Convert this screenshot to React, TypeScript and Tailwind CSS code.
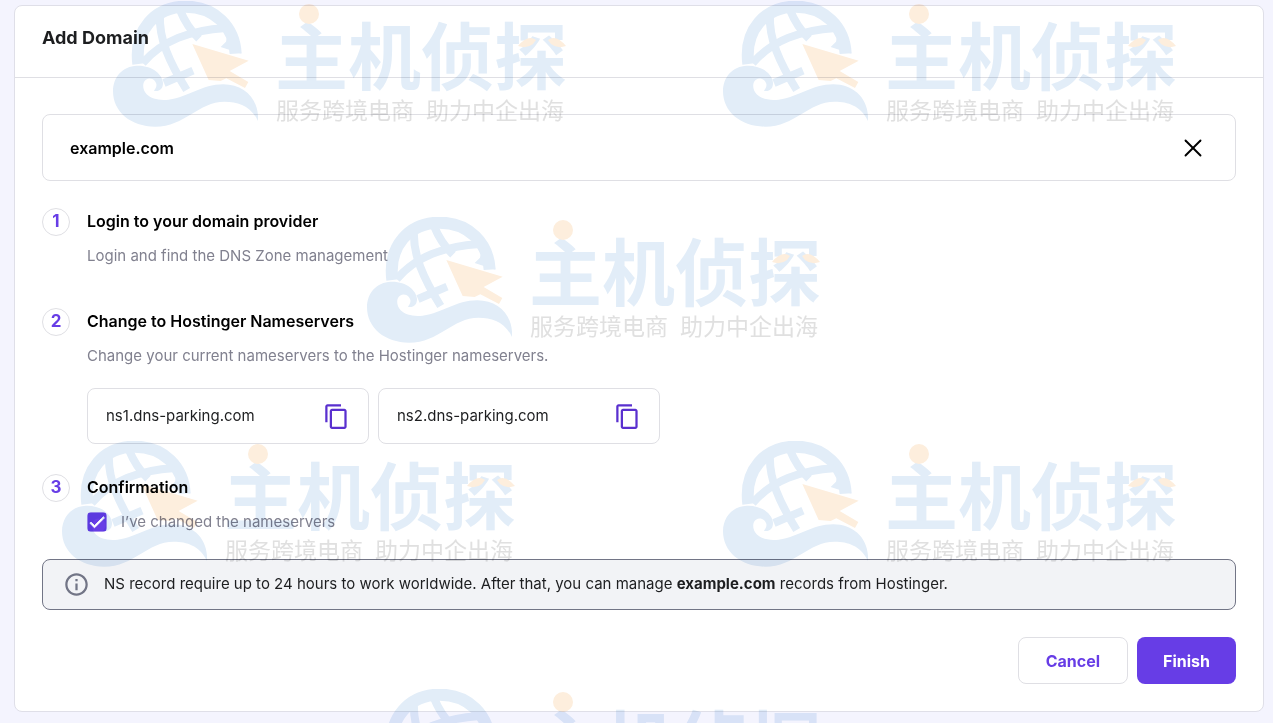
import { useState } from "react";
import type { ReactNode } from "react";
import { X } from "lucide-react";
import { MdCheck, MdContentCopy, MdOutlineInfo } from "react-icons/md";

const nameservers = ["ns1.dns-parking.com", "ns2.dns-parking.com"];

const watermarks = [
  "left-[113px] top-px",
  "left-[723px] top-px",
  "left-[367px] top-[217px]",
  "left-[62px] top-[441px]",
  "left-[723px] top-[441px]",
  "left-[367px] top-[689px]",
];

function Watermark({ position }: { position: string }) {
  return (
    <div className={`absolute flex gap-[17px] mix-blend-multiply ${position}`}>
      <svg width="145" height="127" viewBox="39 3 435 381" fill="none">
        {/* Globe */}
        <g stroke="#e2edf8">
          <path d="M115 192C102 90 165 20 257 20c88 0 146 62 150 141" strokeWidth="36" />
          <path d="M180 45c-4 70 28 142 80 225" strokeWidth="24" />
          <path d="M240 30c12 30 32 62 57 86" strokeWidth="24" />
          <path d="M128 189c60-68 140-98 250-105" strokeWidth="24" />
          <path d="M192 249l87-37" strokeWidth="24" />
        </g>
        <path d="M384 95l-6 30-16 16 62 20-8-46z" fill="#e2edf8" />
        {/* Wave */}
        <path
          d="M110 197c46-2 78 26 79 52 0 16-8 26-27 24 4-8 12-16 4-28-6-9-18-13-28-6-12 8-11 30 2 44 14 14 38 19 66 16 62-8 98-46 164-46 62 0 108 44 104 110-22-46-60-58-100-58-80 0-118 75-209 75-72 0-126-44-126-106 0-44 30-75 71-77z"
          fill="#e2edf8"
        />
        {/* Pointer */}
        <path
          d="M277 132l169 50-57 31 56 33-10 18-56-29-17 8-36-3z"
          fill="#fdeedd"
        />
      </svg>
      <div className="relative pt-[15px]">
        <p className="font-['Noto_Sans_CJK_SC',sans-serif] text-[73px] leading-[72px] font-bold whitespace-nowrap text-[#e2edf8]">
          主机侦探
        </p>
        <svg className="absolute top-0 left-0" width="292" height="90">
          <circle cx="34" cy="13" r="10" fill="#fdeedd" />
          <path d="M243 45q10-12 18-6l-3 4q-6 5-15 2z" fill="#fdeedd" />
          <path d="M291 45q-10-12-18-6l3 4q6 5 15 2z" fill="#fdeedd" />
        </svg>
        <p className="mt-[9px] flex gap-3 pl-px font-['Noto_Sans_CJK_SC',sans-serif] text-[23px] leading-6 whitespace-nowrap text-[#e0e0e0]">
          <span>服务跨境电商</span>
          <span>助力中企出海</span>
        </p>
      </div>
    </div>
  );
}

function Step({
  number,
  title,
  children,
}: {
  number: number;
  title: string;
  children: ReactNode;
}) {
  return (
    <li className="flex gap-[17px]">
      <span className="flex size-7 shrink-0 items-center justify-center rounded-full border border-[#dfdfe4] text-[17px] font-bold text-[#673de6]">
        {number}
      </span>
      <div className="min-w-0 flex-1">
        <h2 className="text-base leading-[26px] font-semibold text-black">
          {title}
        </h2>
        <div className="mt-[10px] leading-6 text-[#81818f]">{children}</div>
      </div>
    </li>
  );
}

export default function App() {
  const [changed, setChanged] = useState(true);

  return (
    <div className="relative min-h-screen overflow-hidden bg-[#f4f4fe] px-[9px] pt-[5px] pb-[10px] pl-[14px] font-['Inter',sans-serif] text-[15px] text-[#1d1e20]">
      <main className="rounded-lg border border-[#dfdfe8] bg-white">
        <header className="border-b border-[#dfdfe4] px-[27px] pt-[18px] pb-[25px]">
          <h1 className="text-lg leading-7 font-bold">Add Domain</h1>
        </header>

        <div className="px-[27px] pt-9 pb-[27px]">
          <div className="flex h-[67px] items-center justify-between rounded-lg border border-[#dfdfe4] px-[27px]">
            <span className="text-base font-semibold text-black">example.com</span>
            <button type="button" aria-label="Clear domain" className="text-black">
              <X size={30} strokeWidth={1.5} />
            </button>
          </div>

          <ol className="mt-[27px]">
            <Step number={1} title="Login to your domain provider">
              <p className="mb-10">Login and find the DNS Zone management</p>
            </Step>
            <Step number={2} title="Change to Hostinger Nameservers">
              <p>Change your current nameservers to the Hostinger nameservers.</p>
              <div className="mt-5 mb-[30px] flex flex-wrap gap-[9px]">
                {nameservers.map((ns) => (
                  <div
                    key={ns}
                    className="flex h-14 w-[282px] items-center justify-between rounded-lg border border-[#dfdfe4] px-[18px] text-[#1d1e20]"
                  >
                    <span>{ns}</span>
                    <button
                      type="button"
                      aria-label={`Copy ${ns}`}
                      className="text-[#5a30cf]"
                    >
                      <MdContentCopy size={27} />
                    </button>
                  </div>
                ))}
              </div>
            </Step>
            <Step number={3} title="Confirmation">
              <label className="flex items-center gap-[14px]">
                <span className="relative flex size-5">
                  <input
                    type="checkbox"
                    checked={changed}
                    onChange={(e) => setChanged(e.target.checked)}
                    className="size-5 appearance-none rounded-sm border border-[#673de6] checked:bg-[#673de6]"
                  />
                  {changed && (
                    <MdCheck
                      size={20}
                      className="pointer-events-none absolute inset-0 stroke-white stroke-1 text-white"
                    />
                  )}
                </span>
                I’ve changed the nameservers
              </label>
            </Step>
          </ol>

          <div className="mt-[25px] flex min-h-[51px] items-center gap-[14px] rounded-lg border border-[#727586] bg-[#f2f3f6] px-5">
            <MdOutlineInfo size={27} className="shrink-0 text-[#727586]" />
            <p>
              NS record require up to 24 hours to work worldwide. After that, you
              can manage <strong>example.com</strong> records from Hostinger.
            </p>
          </div>

          <div className="mt-[27px] flex justify-end gap-[9px] text-base font-bold">
            <button
              type="button"
              className="h-[47px] rounded-lg border border-[#dfdfe4] px-[27px] text-[#673de6]"
            >
              Cancel
            </button>
            <button
              type="button"
              className="h-[47px] rounded-lg bg-[#673de6] px-[26px] text-white"
            >
              Finish
            </button>
          </div>
        </div>
      </main>

      {/* Watermark layer */}
      <div
        aria-hidden="true"
        className="pointer-events-none absolute inset-0 overflow-hidden mix-blend-multiply"
      >
        {watermarks.map((position) => (
          <Watermark key={position} position={position} />
        ))}
      </div>
    </div>
  );
}
